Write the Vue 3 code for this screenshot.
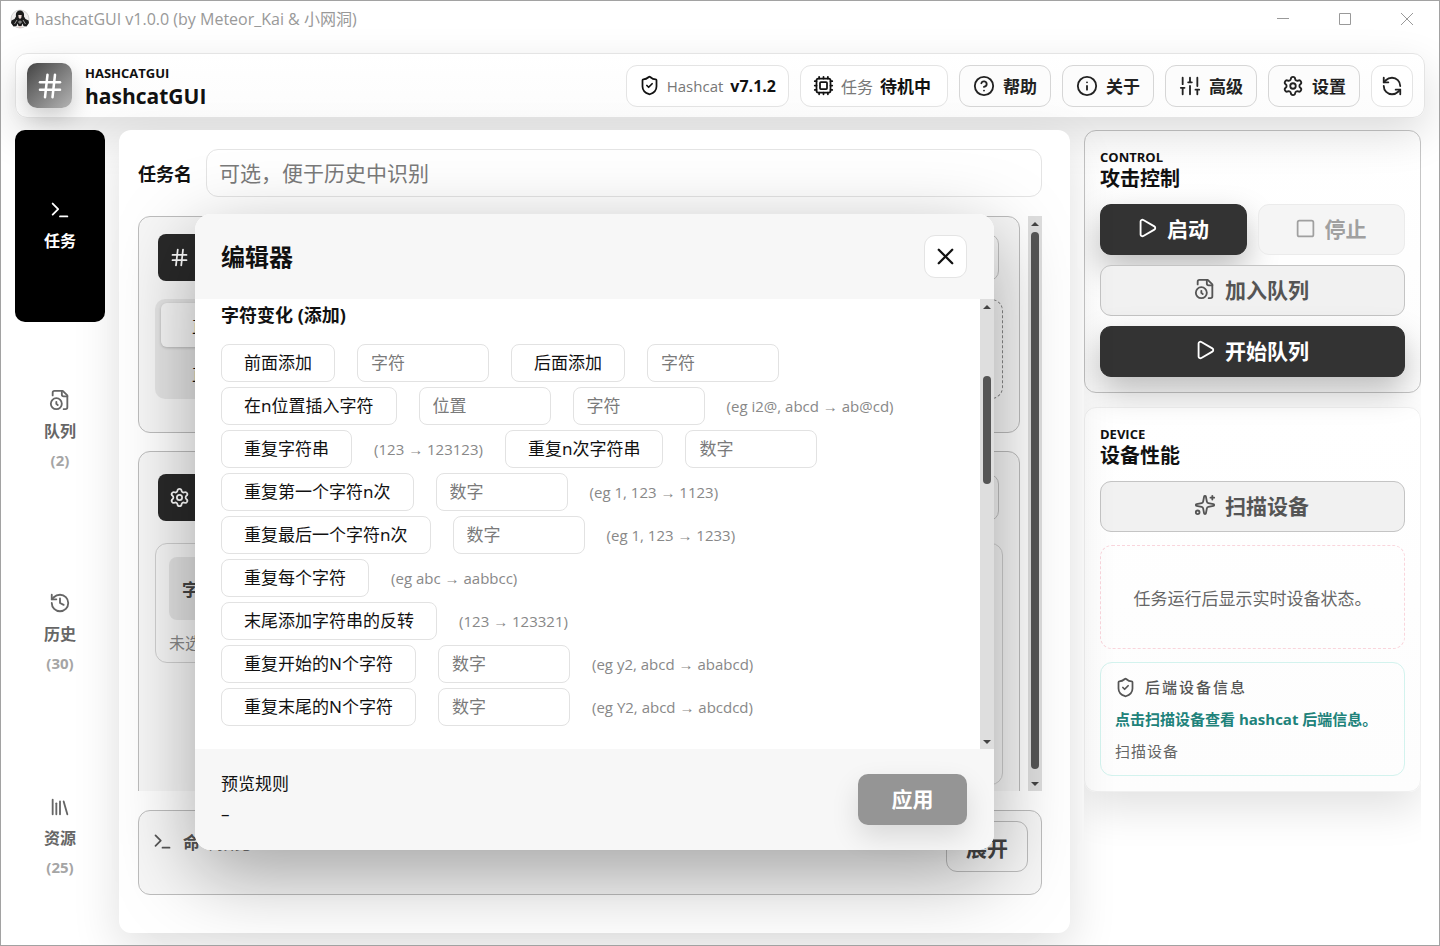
<script setup>
import { h } from 'vue'

const paths = {
  hash: ['M4 9h16', 'M4 15h16', 'M10 3 8 21', 'M16 3l-2 18'],
  terminal: ['m4 17 6-6-6-6', 'M12 19h8'],
  queue: ['M16 22h2a2 2 0 0 0 2-2V7l-5-5H6a2 2 0 0 0-2 2v3', 'M14 2v4a2 2 0 0 0 2 2h4', 'M2 16a6 6 0 1 0 12 0a6 6 0 1 0-12 0', 'M9.5 17.5 8 16.25V14'],
  history: ['M3 12a9 9 0 1 0 9-9 9.75 9.75 0 0 0-6.74 2.74L3 8', 'M3 3v5h5', 'M12 7v5l4 2'],
  library: ['m16 6 4 14', 'M12 6v14', 'M8 8v12', 'M4 4v16'],
  shield: ['M20 13c0 5-3.5 7.5-7.66 8.95a1 1 0 0 1-.67-.01C7.5 20.5 4 18 4 13V6a1 1 0 0 1 1-1c2 0 4.5-1.2 6.24-2.72a1.17 1.17 0 0 1 1.52 0C14.51 3.81 17 5 19 5a1 1 0 0 1 1 1z', 'm9 12 2 2 4-4'],
  cpu: ['M6 4h12a2 2 0 0 1 2 2v12a2 2 0 0 1-2 2H6a2 2 0 0 1-2-2V6a2 2 0 0 1 2-2z', 'M9 8h6a1 1 0 0 1 1 1v6a1 1 0 0 1-1 1H9a1 1 0 0 1-1-1V9a1 1 0 0 1 1-1z', 'M12 20v2M12 2v2M17 20v2M17 2v2M7 20v2M7 2v2M2 12h2M2 17h2M2 7h2M20 12h2M20 17h2M20 7h2'],
  help: ['M2 12a10 10 0 1 0 20 0a10 10 0 1 0-20 0', 'M9.09 9a3 3 0 0 1 5.83 1c0 2-3 3-3 3', 'M12 17h.01'],
  info: ['M2 12a10 10 0 1 0 20 0a10 10 0 1 0-20 0', 'M12 16v-4', 'M12 8h.01'],
  sliders: ['M4 21v-7M4 10V3M12 21v-9M12 8V3M20 21v-5M20 12V3M2 14h4M10 8h4M18 16h4'],
  settings: ['M9.671 4.136a2.34 2.34 0 0 1 4.659 0 2.34 2.34 0 0 0 3.319 1.915 2.34 2.34 0 0 1 2.33 4.033 2.34 2.34 0 0 0 0 3.831 2.34 2.34 0 0 1-2.33 4.033 2.34 2.34 0 0 0-3.319 1.915 2.34 2.34 0 0 1-4.659 0 2.34 2.34 0 0 0-3.32-1.915 2.34 2.34 0 0 1-2.33-4.033 2.34 2.34 0 0 0 0-3.831A2.34 2.34 0 0 1 6.35 6.051a2.34 2.34 0 0 0 3.319-1.915', 'M9 12a3 3 0 1 0 6 0a3 3 0 1 0-6 0'],
  refresh: ['M21 12a9 9 0 0 0-9-9 9.75 9.75 0 0 0-6.74 2.74L3 8', 'M3 3v5h5', 'M3 12a9 9 0 0 0 9 9 9.75 9.75 0 0 0 6.74-2.74L21 16', 'M16 16h5v5'],
  play: ['M5 5a2 2 0 0 1 3.008-1.728l11.997 6.998a2 2 0 0 1 .003 3.458l-12 7A2 2 0 0 1 5 19z'],
  square: ['M5 3h14a2 2 0 0 1 2 2v14a2 2 0 0 1-2 2H5a2 2 0 0 1-2-2V5a2 2 0 0 1 2-2z'],
  sparkles: ['M11.017 2.814a1 1 0 0 1 1.966 0l1.051 5.558a2 2 0 0 0 1.594 1.594l5.558 1.051a1 1 0 0 1 0 1.966l-5.558 1.051a2 2 0 0 0-1.594 1.594l-1.051 5.558a1 1 0 0 1-1.966 0l-1.051-5.558a2 2 0 0 0-1.594-1.594l-5.558-1.051a1 1 0 0 1 0-1.966l5.558-1.051a2 2 0 0 0 1.594-1.594z', 'M20 2v4', 'M22 4h-4', 'M2 20a2 2 0 1 0 4 0a2 2 0 1 0-4 0'],
  close: ['M18 6 6 18', 'm6 6 12 12'],
}

const Icon = (props) =>
  h(
    'svg',
    {
      width: props.size || 22,
      height: props.size || 22,
      viewBox: '0 0 24 24',
      fill: 'none',
      stroke: 'currentColor',
      'stroke-width': 2,
      'stroke-linecap': 'round',
      'stroke-linejoin': 'round',
      'aria-hidden': 'true',
    },
    paths[props.name].map((d) => h('path', { d })),
  )
Icon.props = ['name', 'size']

const nav = [
  { icon: 'terminal', label: '任务', active: true },
  { icon: 'queue', label: '队列', count: '(2)' },
  { icon: 'history', label: '历史', count: '(30)' },
  { icon: 'library', label: '资源', count: '(25)' },
]

const actions = [
  { icon: 'help', label: '帮助' },
  { icon: 'info', label: '关于' },
  { icon: 'sliders', label: '高级' },
  { icon: 'settings', label: '设置' },
]

const rules = [
  [{ b: '前面添加' }, { i: '字符' }, { b: '后面添加' }, { i: '字符' }],
  [{ b: '在n位置插入字符' }, { i: '位置' }, { i: '字符' }, { t: '(eg i2@, abcd → ab@cd)' }],
  [{ b: '重复字符串' }, { t: '(123 → 123123)' }, { b: '重复n次字符串' }, { i: '数字' }],
  [{ b: '重复第一个字符n次' }, { i: '数字' }, { t: '(eg 1, 123 → 1123)' }],
  [{ b: '重复最后一个字符n次' }, { i: '数字' }, { t: '(eg 1, 123 → 1233)' }],
  [{ b: '重复每个字符' }, { t: '(eg abc → aabbcc)' }],
  [{ b: '末尾添加字符串的反转' }, { t: '(123 → 123321)' }],
  [{ b: '重复开始的N个字符' }, { i: '数字' }, { t: '(eg y2, abcd → ababcd)' }],
  [{ b: '重复末尾的N个字符' }, { i: '数字' }, { t: '(eg Y2, abcd → abcdcd)' }],
]
</script>

<template>
  <div class="window">
    <div class="titlebar">
      <svg class="avatar" width="20" height="20" viewBox="0 0 20 20" aria-hidden="true">
        <circle cx="10" cy="10" r="9" fill="#f1efef" stroke="#bbb" stroke-width=".6" />
        <path d="M10 1.500C7 1.500 5.500 4 6 7.500L4.500 10 1.500 11.500 1 14l2.500 3.500 3-.5 1-2.500L8.500 17h3l1-2.500 1 2.500 3 .5L19 14l-.5-2.500-3-1.500L14 7.500C14.500 4 13 1.500 10 1.500z" fill="#1c1c1c" />
        <path d="M8.300 6h3.400l-.4 2.800L10 10 8.700 8.800z" fill="#ecd8d4" />
        <path d="M7 11l-2.500 4M13 11l2.500 4M10 11.500V15M8 13h4" stroke="#cfcfcf" stroke-width=".7" fill="none" />
        <path d="M8.500 17h3l-.5 2H9z" fill="#e3c9c4" />
      </svg>
      <span class="caption">hashcatGUI v1.0.0 (by Meteor_Kai &amp; 小网洞)</span>
      <button class="win" aria-label="最小化"><svg width="12" height="12" viewBox="0 0 12 12"><path d="M0 5.500h12" /></svg></button>
      <button class="win" aria-label="最大化"><svg width="12" height="12" viewBox="0 0 12 12"><path d="M.5.5h11v11H.5z" /></svg></button>
      <button class="win" aria-label="关闭"><svg width="12" height="12" viewBox="0 0 12 12"><path d="M0 0l12 12M12 0L0 12" /></svg></button>
    </div>

    <header class="topbar">
      <div class="logo"><Icon name="hash" :size="30" /></div>
      <div class="brand">
        <p class="eyebrow">HASHCATGUI</p>
        <h1>hashcatGUI</h1>
      </div>
      <div class="pill"><Icon name="shield" :size="21" /><span>Hashcat</span><b>v7.1.2</b></div>
      <div class="pill status"><Icon name="cpu" :size="21" /><span>任务</span><b>待机中</b></div>
      <button v-for="a in actions" :key="a.label" class="action"><Icon :name="a.icon" />{{ a.label }}</button>
      <button class="action square" aria-label="刷新"><Icon name="refresh" /></button>
    </header>

    <div class="body">
      <nav class="side">
        <button v-for="n in nav" :key="n.label" class="tab" :class="{ active: n.active }">
          <Icon :name="n.icon" />
          <span class="tab-label">{{ n.label }}</span>
          <span v-if="n.count" class="tab-count">{{ n.count }}</span>
        </button>
      </nav>

      <main class="main">
        <div class="name-row">
          <label for="task-name">任务名</label>
          <input id="task-name" type="text" placeholder="可选，便于历史中识别" />
        </div>

        <div class="scroll">
          <div class="cards">
            <section class="card">
              <div class="card-head">
                <div class="badge"><Icon name="hash" :size="21" /></div>
                <button class="ghost" aria-label="选择文件"></button>
              </div>
              <div class="cols">
                <div class="switch">
                  <button class="seg on">直</button>
                  <button class="seg">直</button>
                </div>
                <div class="drop"></div>
              </div>
            </section>
            <section class="card">
              <div class="card-head">
                <div class="badge"><Icon name="settings" :size="21" /></div>
                <button class="ghost" aria-label="模式设置"></button>
              </div>
              <div class="cols top">
                <div class="dict">
                  <button class="dict-btn">字典</button>
                  <p>未选</p>
                </div>
                <div class="panel"></div>
              </div>
            </section>
          </div>
          <div class="bar" aria-hidden="true">
            <i class="up"></i><span class="thumb outer"></span><i class="down"></i>
          </div>
        </div>

        <section class="command">
          <Icon name="terminal" :size="21" />
          <h2>命令预览</h2>
          <button class="expand">展开</button>
        </section>

        <div class="layer">
          <section class="dialog" role="dialog" aria-labelledby="dialog-title">
            <div class="dialog-head">
              <h2 id="dialog-title">编辑器</h2>
              <button class="close" aria-label="关闭编辑器"><Icon name="close" :size="27" /></button>
            </div>
            <div class="dialog-body">
              <div class="rules">
                <h3>字符变化 (添加)</h3>
                <div v-for="(row, r) in rules" :key="r" class="rule">
                  <template v-for="(c, k) in row" :key="k">
                    <button v-if="c.b" class="rule-btn">{{ c.b }}</button>
                    <input v-else-if="c.i" class="rule-input" type="text" :placeholder="c.i" :aria-label="c.i" />
                    <span v-else class="hint">{{ c.t }}</span>
                  </template>
                </div>
              </div>
              <div class="bar" aria-hidden="true">
                <i class="up"></i><span class="before"></span><span class="thumb"></span><span class="after"></span><i class="down"></i>
              </div>
            </div>
            <div class="dialog-foot">
              <div class="preview">
                <p>预览规则</p>
                <p>–</p>
              </div>
              <button class="apply" disabled>应用</button>
            </div>
          </section>
        </div>
      </main>

      <aside class="right">
        <section class="box control">
          <p class="eyebrow">CONTROL</p>
          <h2>攻击控制</h2>
          <div class="pair">
            <button class="btn dark"><Icon name="play" />启动</button>
            <button class="btn off" disabled><Icon name="square" :size="21" />停止</button>
          </div>
          <button class="btn"><Icon name="queue" />加入队列</button>
          <button class="btn dark"><Icon name="play" />开始队列</button>
        </section>
        <section class="box device">
          <p class="eyebrow">DEVICE</p>
          <h2>设备性能</h2>
          <button class="btn"><Icon name="sparkles" />扫描设备</button>
          <div class="empty">任务运行后显示实时设备状态。</div>
          <div class="backend">
            <p class="backend-title"><Icon name="shield" :size="21" />后端设备信息</p>
            <p class="backend-tip">点击扫描设备查看 hashcat 后端信息。</p>
            <p class="backend-sub">扫描设备</p>
          </div>
        </section>
      </aside>
    </div>
  </div>
</template>

<style>
body {
  margin: 0;
}
</style>

<style scoped>
* {
  box-sizing: border-box;
}
h1, h2, h3, p {
  margin: 0;
}
button, input {
  font: inherit;
  color: inherit;
  margin: 0;
}
svg {
  flex: none;
}
.window {
  height: 100vh;
  display: flex;
  flex-direction: column;
  overflow: hidden;
  border: 1px solid #a2a2a2;
  background: #fff;
  color: #111;
  font-family: "Noto Sans", "Noto Sans CJK SC", sans-serif;
  font-size: 17px;
}
.titlebar {
  height: 36px;
  display: flex;
  align-items: center;
  padding: 0 26px 0 9px;
  flex: none;
}
.caption {
  margin-left: 5px;
  margin-right: auto;
  font-family: "Open Sans", "Noto Sans CJK SC", sans-serif;
  font-size: 16px;
  line-height: 22px;
  color: #999;
}
.win {
  border: 0;
  background: none;
  padding: 0;
  margin-left: 50px;
  line-height: 0;
}
.win svg {
  fill: none;
  stroke: #999;
  stroke-width: 1;
}
.topbar {
  position: relative;
  margin: 16px 14px 12px;
  height: 65px;
  flex: none;
  display: flex;
  align-items: center;
  gap: 11px;
  padding: 0 11px;
  border: 1px solid #e4e4e4;
  border-radius: 12px;
  background: linear-gradient(#fff, #fcfcfc);
  box-shadow: 0 16px 44px rgba(0, 0, 0, 0.14);
}
.logo {
  width: 45px;
  height: 45px;
  display: grid;
  place-items: center;
  border-radius: 10px;
  color: #fff;
  background: linear-gradient(135deg, #444, #b4b4b4);
  box-shadow: 0 8px 22px rgba(0, 0, 0, 0.2);
}
.brand {
  margin-left: 2px;
  margin-right: auto;
}
.eyebrow {
  font-family: "Open Sans", sans-serif;
  font-size: 13px;
  line-height: 20px;
  font-weight: 700;
}
.brand h1 {
  font-family: "Open Sans", sans-serif;
  font-size: 21px;
  line-height: 26px;
  font-weight: 700;
}
.pill, .action {
  height: 42px;
  display: flex;
  align-items: center;
  border: 1px solid #e4e4e4;
  border-radius: 11px;
  background: #fff;
  white-space: nowrap;
}
.pill {
  gap: 7px;
  padding: 0 12px;
}
.pill span {
  font-family: "Open Sans", "Noto Sans CJK SC", sans-serif;
  font-size: 15px;
  color: #777;
}
.pill b {
  font-family: "Open Sans", "Noto Sans CJK SC", sans-serif;
  font-size: 16px;
}
.pill.status {
  min-width: 148px;
}
.pill.status span {
  font-size: 16px;
}
.pill.status b {
  font-size: 17px;
}
.action {
  gap: 8px;
  padding: 0 13px;
  border-color: #d6d6d6;
  background: #fcfcfc;
  font-weight: 700;
  color: #222;
}
.action.square {
  width: 42px;
  padding: 0;
  justify-content: center;
  border-color: #e4e4e4;
  background: #fff;
}
.body {
  flex: 1;
  min-height: 0;
  display: grid;
  grid-template-columns: 90px minmax(0, 1fr) 337px;
  grid-template-rows: minmax(0, 1fr);
  gap: 14px;
  padding: 0 18px 12px 14px;
}
.side {
  display: grid;
  grid-auto-rows: 1fr;
  gap: 12px;
}
.tab {
  border: 0;
  border-radius: 10px;
  background: none;
  display: flex;
  flex-direction: column;
  align-items: center;
  justify-content: center;
  color: #666;
  font-weight: 700;
  font-size: 16px;
}
.tab-label {
  line-height: 24px;
  margin-top: 8px;
}
.tab-count {
  font-size: 15px;
  line-height: 22px;
  margin-top: 6px;
  color: #a5a5a5;
}
.tab.active {
  position: relative;
  background: #000;
  color: #fff;
}
.main {
  position: relative;
  min-width: 0;
  display: flex;
  flex-direction: column;
  gap: 19px;
  padding: 19px 28px 38px 19px;
  border-radius: 12px;
  background: #fff;
  box-shadow: 0 16px 48px rgba(0, 0, 0, 0.13);
}
.name-row {
  display: flex;
  align-items: center;
  gap: 14px;
}
.name-row label {
  font-size: 18px;
  font-weight: 700;
}
.name-row input {
  flex: 1;
  min-width: 0;
  height: 48px;
  padding: 0 12px;
  border: 1px solid #e4e4e4;
  border-radius: 12px;
  background: none;
  font-size: 21px;
}
input::placeholder {
  color: #7a7a7a;
  opacity: 1;
}
.scroll {
  flex: 1;
  min-height: 0;
  display: flex;
  gap: 8px;
  overflow: hidden;
}
.cards {
  flex: 1;
  display: flex;
  flex-direction: column;
  gap: 18px;
}
.card, .command {
  border: 1px solid #bdbdbd;
  border-radius: 12px;
  background: rgba(0, 0, 0, 0.03);
}
.card {
  flex: none;
  padding: 17px 16px 33px;
}
.card-head {
  display: flex;
  justify-content: space-between;
  padding: 0 4px 0 3px;
  margin-bottom: 18px;
}
.card + .card .card-head {
  margin-top: 5px;
  margin-bottom: 22px;
}
.badge {
  width: 47px;
  height: 47px;
  display: grid;
  place-items: center;
  padding-right: 4px;
  border-radius: 8px;
  background: #292929;
  color: #fff;
}
.ghost {
  width: 100px;
  border: 1px solid #c2c2c2;
  border-radius: 10px;
  background: none;
}
.cols {
  display: grid;
  grid-template-columns: 200px 1fr;
  gap: 16px;
}
.cols.top {
  align-items: start;
}
.switch {
  display: flex;
  flex-direction: column;
  gap: 4px;
  padding: 4px 6px;
  border-radius: 10px;
  background: rgba(0, 0, 0, 0.07);
}
.seg {
  height: 44px;
  padding: 0 0 0 31px;
  text-align: left;
  border: 0;
  border-radius: 6px;
  background: none;
}
.seg.on {
  background: rgba(255, 255, 255, 0.7);
  box-shadow: 0 1px 3px rgba(0, 0, 0, 0.2);
}
.drop {
  height: 100px;
  border: 1px dashed #888;
  border-radius: 12px;
}
.dict, .panel {
  border: 1px solid #d0d0d0;
  border-radius: 12px;
}
.dict {
  padding: 13px 13px 6px;
}
.dict-btn {
  width: 100%;
  height: 63px;
  padding: 0 0 0 13px;
  text-align: left;
  border: 0;
  border-radius: 8px;
  background: rgba(0, 0, 0, 0.08);
  color: #444;
  font-weight: 700;
}
.dict p {
  margin-top: 10px;
  font-size: 16px;
  line-height: 26px;
  color: #888;
}
.panel {
  height: 242px;
}
.bar {
  width: 14px;
  flex: none;
  display: flex;
  flex-direction: column;
  align-items: center;
  background: #dedede;
}
.bar i {
  width: 0;
  height: 0;
  border: 4px solid transparent;
}
.bar .up {
  border-top: 0;
  border-bottom-color: #444;
  margin: 6px 0;
}
.bar .down {
  border-bottom: 0;
  border-top-color: #444;
  margin: 6px 0 5px;
}
.thumb {
  width: 8px;
  flex: 108;
  border-radius: 4px;
  background: #555;
}
.thumb.outer {
  flex: 1;
  margin-bottom: 7px;
}
.before {
  flex: 62;
}
.after {
  flex: 250;
}
.command {
  height: 85px;
  display: flex;
  align-items: flex-start;
  padding: 10px 13px;
  color: #555;
}
.command svg {
  margin: 10px 10px 0 0;
}
.command h2 {
  margin-top: 9px;
  font-size: 17px;
  line-height: 25px;
}
.expand {
  width: 82px;
  height: 51px;
  margin-left: auto;
  border: 1px solid #bdbdbd;
  border-radius: 11px;
  background: none;
  font-size: 21px;
  font-weight: 700;
  color: #444;
}
.layer {
  position: absolute;
  inset: 0;
  display: grid;
  place-items: center;
}
.dialog {
  width: 84%;
  border-radius: 16px;
  background: #fff;
  box-shadow: 0 24px 80px rgba(0, 0, 0, 0.35);
}
.dialog-head {
  display: flex;
  align-items: center;
  justify-content: space-between;
  height: 85px;
  padding: 0 27px 0 26px;
  border-radius: 16px 16px 0 0;
  background: #f7f7f7;
}
.dialog-head h2 {
  font-size: 24px;
  padding-bottom: 2px;
}
.close {
  width: 43px;
  height: 43px;
  padding: 0;
  display: grid;
  place-items: center;
  border: 1px solid #e4e4e4;
  border-radius: 11px;
  background: #fff;
}
.dialog-body {
  display: flex;
}
.rules {
  flex: 1;
  display: flex;
  flex-direction: column;
  gap: 5px;
  padding: 4px 26px 23px;
}
.rules h3 {
  font-size: 18px;
  line-height: 24px;
  margin-bottom: 12px;
}
.rule {
  display: flex;
  align-items: center;
  gap: 22px;
}
.rule-btn, .rule-input {
  height: 38px;
  border: 1px solid #e2e2e2;
  border-radius: 8px;
  background: #fff;
}
.rule-btn {
  padding: 0 22px 2px;
}
.rule-input {
  width: 132px;
  padding: 0 13px;
}
.hint {
  font-family: "Open Sans", "Noto Sans", sans-serif;
  font-size: 15px;
  color: #888;
}
.dialog-foot {
  display: flex;
  align-items: center;
  justify-content: space-between;
  height: 101px;
  padding: 0 27px 0 26px;
  border-radius: 0 0 16px 16px;
  background: #f7f7f7;
}
.preview {
  line-height: 30px;
}
.apply {
  width: 109px;
  height: 51px;
  padding: 0 0 2px;
  border: 0;
  border-radius: 10px;
  background: #959595;
  color: #fff;
  font-size: 21px;
  font-weight: 700;
  box-shadow: 0 12px 28px rgba(0, 0, 0, 0.12);
}
.right {
  min-width: 0;
  overflow: hidden;
}
.box {
  display: flex;
  flex-direction: column;
  padding: 16px 15px 15px;
  border-radius: 12px;
  background: linear-gradient(#fff, #fdfdfd);
}
.box h2 {
  font-size: 20px;
  line-height: 24px;
  margin-bottom: 13px;
}
.control {
  gap: 0;
  border: 1px solid #c6c6c6;
}
.control .btn + .btn, .pair + .btn {
  margin-top: 10px;
}
.pair {
  display: grid;
  grid-template-columns: 1fr 1fr;
  gap: 11px;
}
.pair .btn + .btn {
  margin-top: 0;
}
.btn {
  height: 51px;
  display: flex;
  align-items: center;
  justify-content: center;
  gap: 9px;
  padding: 0 2px 3px 0;
  border: 1px solid #c4c4c4;
  border-radius: 11px;
  background: #f1f1f1;
  color: #555;
  font-size: 21px;
  font-weight: 700;
}
.btn.dark {
  border-color: #333;
  background: #333;
  color: #fff;
  box-shadow: 0 14px 32px rgba(0, 0, 0, 0.26);
}
.btn.off {
  border-color: #ebebeb;
  background: #f5f5f5;
  color: #a0a0a0;
}
.device {
  margin-top: 14px;
  border: 1px solid #f0f0f0;
  box-shadow: 0 16px 44px rgba(0, 0, 0, 0.12);
}
.empty {
  height: 104px;
  margin-top: 13px;
  display: grid;
  place-items: center;
  border: 1px dashed #f9d5dc;
  border-radius: 12px;
  color: #666;
}
.backend {
  margin-top: 13px;
  padding: 8px 14px;
  border: 1px solid #d3f3ee;
  border-radius: 12px;
  font-size: 15px;
  line-height: 32px;
}
.backend-title {
  display: flex;
  align-items: center;
  gap: 9px;
  letter-spacing: 2px;
  font-weight: 500;
  color: #555;
}
.backend-tip {
  font-family: "Open Sans", "Noto Sans CJK SC", sans-serif;
  font-weight: 700;
  color: #20827a;
}
.backend-sub {
  letter-spacing: 1px;
  color: #666;
}
</style>
